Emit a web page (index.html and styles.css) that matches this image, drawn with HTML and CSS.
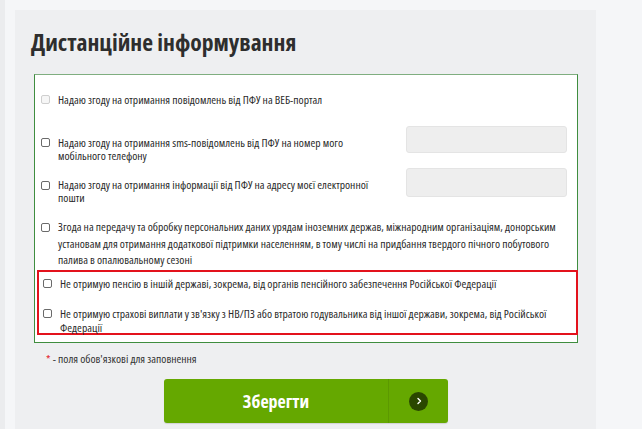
FILE: index.html
```html
<!DOCTYPE html>
<html lang="uk">
<head>
<meta charset="utf-8">
<title>Дистанційне інформування</title>
<link rel="stylesheet" href="styles.css">
</head>
<body>
<div class="page">
  <div class="strip"></div>
  <div class="panel">
    <h1 class="title">Дистанційне інформування</h1>
    <div class="box">
      <div class="row row1">
        <span class="cb cb-disabled"></span>
        <span class="label">Надаю згоду на отримання повідомлень від ПФУ на ВЕБ-портал</span>
      </div>
      <div class="row row2 with-input">
        <span class="cb"></span>
        <span class="label narrow">Надаю згоду на отримання sms-повідомлень від ПФУ на номер мого мобільного телефону</span>
        <span class="input"></span>
      </div>
      <div class="row row3 with-input">
        <span class="cb"></span>
        <span class="label narrow">Надаю згоду на отримання інформації від ПФУ на адресу моєї електронної пошти</span>
        <span class="input input-tall"></span>
      </div>
      <div class="row row4">
        <span class="cb"></span>
        <span class="label tall">Згода на передачу та обробку персональних даних урядам іноземних держав, міжнародним організаціям, донорським установам для отримання додаткової підтримки населенням, в тому числі на придбання твердого пічного побутового палива в опалювальному сезоні</span>
      </div>
      <div class="highlight">
        <div class="row row5">
          <span class="cb"></span>
          <span class="label">Не отримую пенсію в іншій державі, зокрема, від органів пенсійного забезпечення Російської Федерації</span>
        </div>
        <div class="row row6">
          <span class="cb"></span>
          <span class="label">Не отримую страхові виплати у зв'язку з НВ/ПЗ або втратою годувальника від іншої держави, зокрема, від Російської Федерації</span>
        </div>
      </div>
    </div>
    <p class="note"><span class="star">*</span> - поля обов'язкові для заповнення</p>
    <div class="actions">
      <button class="save" type="button">
        <span class="save-text">Зберегти</span>
        <span class="save-icon">
          <span class="circle">
            <svg width="8" height="8" viewBox="0 0 8 8"><path d="M3 1.5 L5.5 4 L3 6.5" fill="none" stroke="#fff" stroke-width="1.4" stroke-linecap="round" stroke-linejoin="round"/></svg>
          </span>
        </span>
      </button>
    </div>
  </div>
</div>
</body>
</html>
```

FILE: styles.css
```css
html, body {
  margin: 0;
  padding: 0;
  background: #f5f6f8;
  height: 100%;
  overflow: hidden;
}

.page {
  display: flex;
  height: 429px;
}

.strip {
  width: 5px;
  background: #ebecee;
  margin-right: 10px;
}

.panel {
  margin-top: 10px;
  width: 581px;
  background: #eeeff1;
  box-sizing: border-box;
}

.title {
  margin: 0;
  padding: 18px 0 0 16px;
  height: 64px;
  box-sizing: border-box;
  font-family: "Open Sans", sans-serif;
  font-weight: 700;
  font-stretch: 75%;
  font-size: 23.6px;
  line-height: 28px;
  color: #2e2e2e;
}

.box {
  margin-left: 19px;
  width: 544px;
  height: 269px;
  box-sizing: border-box;
  background: #fff;
  border: 1px solid #3f8d3f;
  border-top-color: #7fae80;
  font-family: "Open Sans", sans-serif;
  font-stretch: 75%;
  font-size: 11.6px;
  color: #2a2a2a;
}

.row {
  display: flex;
  align-items: flex-start;
  padding-left: 6px;
}

.cb {
  flex: none;
  width: 7px;
  height: 7px;
  border: 1px solid #6a6a6a;
  border-radius: 2px;
  margin-top: 2px;
  margin-right: 8px;
  background: #fff;
}

.cb-disabled {
  border-color: #cfcfcf;
  background: #f6f6f6;
}

.label {
  line-height: 13px;
  width: 509px;
}

.label.narrow {
  width: 322px;
}

.label.tall {
  line-height: 16.5px;
}

.row1 {
  padding-top: 18px;
}

.row2 {
  padding-top: 20px;
}

.row2 .label {
  margin-top: 9.5px;
}

.row2 .cb {
  margin-top: 12px;
}

.row3 {
  padding-top: 6px;
}

.row3 .label {
  margin-top: 10.5px;
}

.row3 .cb {
  margin-top: 13px;
}

.input {
  flex: none;
  margin-left: auto;
  margin-right: 10px;
  width: 159px;
  height: 25px;
  background: #eeeeee;
  border: 1px solid #e4e4e4;
  border-radius: 3px;
}

.input-tall {
  height: 27px;
}

.row4 {
  padding-top: 15px;
}

.row4 .cb {
  margin-top: 4px;
}

.highlight {
  margin-left: 2px;
  margin-right: -1px;
  margin-top: 1px;
  border: 2px solid #e3121c;
  height: 65px;
  box-sizing: border-box;
}

.highlight .row {
  padding-left: 4px;
}

.row5 {
  padding-top: 5px;
}

.row6 {
  padding-top: 17px;
}

.row6 .label {
  line-height: 14px;
}

.note {
  margin: 9px 0 0 31px;
  font-family: "Open Sans", sans-serif;
  font-stretch: 75%;
  font-size: 11.6px;
  line-height: 13px;
  color: #333;
}

.star {
  color: #e3121c;
}

.actions {
  padding: 14px 0 0 149px;
}

.save {
  display: flex;
  width: 284px;
  height: 44px;
  padding: 0;
  border: none;
  border-radius: 3px;
  background: #65a800;
  box-shadow: 0 1px 1px rgba(0,0,0,0.12);
  cursor: pointer;
}

.save-text {
  flex: none;
  width: 224px;
  height: 44px;
  line-height: 44px;
  text-align: center;
  font-family: "Open Sans", sans-serif;
  font-stretch: 75%;
  font-weight: 700;
  font-size: 18px;
  color: #fff;
}

.save-icon {
  flex: 1;
  height: 44px;
  display: flex;
  align-items: center;
  justify-content: center;
  border-left: 1px solid #5c9900;
}

.circle {
  width: 19px;
  height: 19px;
  border-radius: 50%;
  background: #2a4700;
  display: flex;
  align-items: center;
  justify-content: center;
}
```
